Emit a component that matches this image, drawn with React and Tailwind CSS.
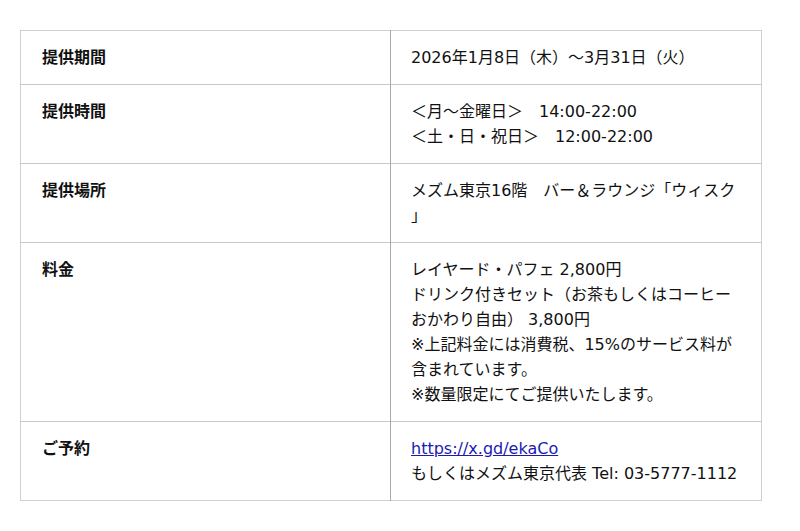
import React from "react";

const rows = [
  { label: "提供期間", lines: ["2026年1月8日（木）〜3月31日（火）"] },
  {
    label: "提供時間",
    lines: ["＜月〜金曜日＞　14:00-22:00", "＜土・日・祝日＞　12:00-22:00"],
  },
  {
    label: "提供場所",
    lines: ["メズム東京16階　バー＆ラウンジ「ウィスク」"],
    anywhere: true,
  },
  {
    label: "料金",
    lines: [
      "レイヤード・パフェ 2,800円",
      "ドリンク付きセット（お茶もしくはコーヒーおかわり自由） 3,800円",
      "※上記料金には消費税、15%のサービス料が含まれています。",
      "※数量限定にてご提供いたします。",
    ],
  },
];

function App() {
  return (
    <div className="bg-white min-h-screen px-5 pt-[30px] text-[16px] leading-[25px] text-[#111] font-['DejaVu_Sans','Noto_Sans_CJK_JP',sans-serif]">
      <table className="w-[742px] table-fixed border-collapse border border-[#d0d0d0]">
        <tbody>
          {rows.map((row) => (
            <tr key={row.label} className="border-b border-[#c8c8c8]">
              <th className="w-[370px] border-r border-[#a8a8a8] px-[21px] py-[14px] text-left align-top font-bold">
                {row.label}
              </th>
              <td
                className={
                  row.anywhere
                    ? "px-[20px] py-[14px] align-top [line-break:anywhere]"
                    : "px-[20px] py-[14px] align-top"
                }
              >
                {row.lines.map((line, i) => (
                  <div key={i}>{line}</div>
                ))}
              </td>
            </tr>
          ))}
          <tr>
            <th className="w-[370px] border-r border-[#a8a8a8] px-[21px] py-[14px] text-left align-top font-bold">
              ご予約
            </th>
            <td className="px-[20px] py-[14px] align-top">
              <a href="#" className="text-[#1a1ab0] underline">
                https://x.gd/ekaCo
              </a>
              <div>もしくはメズム東京代表 Tel: 03-5777-1112</div>
            </td>
          </tr>
        </tbody>
      </table>
    </div>
  );
}

export default App;
